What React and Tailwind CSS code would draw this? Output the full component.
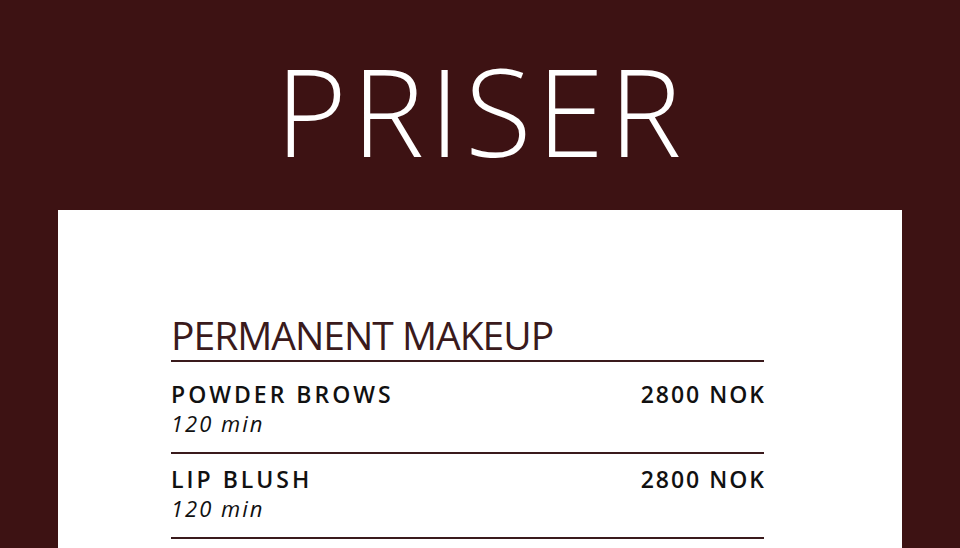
import React from "react";

const services = [
  { name: "POWDER BROWS", time: "120 min", price: "2800 NOK" },
  { name: "LIP BLUSH", time: "120 min", price: "2800 NOK" },
];

const App = () => {
  return (
    <div
      className="bg-[#3d1213] h-[548px] overflow-hidden"
      style={{ fontFamily: '"Open Sans", "Liberation Sans", sans-serif' }}
    >
      {/* Header */}
      <div className="h-[210px] flex justify-center pt-[49px] pl-[2px]">
        <h1 className="text-white text-[122px] font-[350] leading-none tracking-[5px]">PRISER</h1>
      </div>

      {/* Card */}
      <div className="mx-[58px] bg-white h-[400px] pl-[113px] pr-[138px] pt-[105px]">
        <h2 className="text-[#3a1a1c] text-[39px] font-normal leading-none tracking-[-1px] pb-[6px] mb-[7px] border-b-2 border-[#3a1a1c]">
          PERMANENT MAKEUP
        </h2>
        {services.map((s) => (
          <div key={s.name} className="flex justify-between border-b-2 border-[#3a1a1c] pt-[11px] pb-[15px]">
            <div>
              <p className="text-[#111] text-[23px] font-semibold leading-[29px] tracking-[3px]">{s.name}</p>
              <p className="text-[#111] text-[22px] italic leading-[28px] tracking-[2px]">{s.time}</p>
            </div>
            <p className="text-[#111] text-[23px] font-semibold leading-[29px] tracking-[2px] -mr-[2px]">{s.price}</p>
          </div>
        ))}
      </div>
    </div>
  );
};

export default App;
